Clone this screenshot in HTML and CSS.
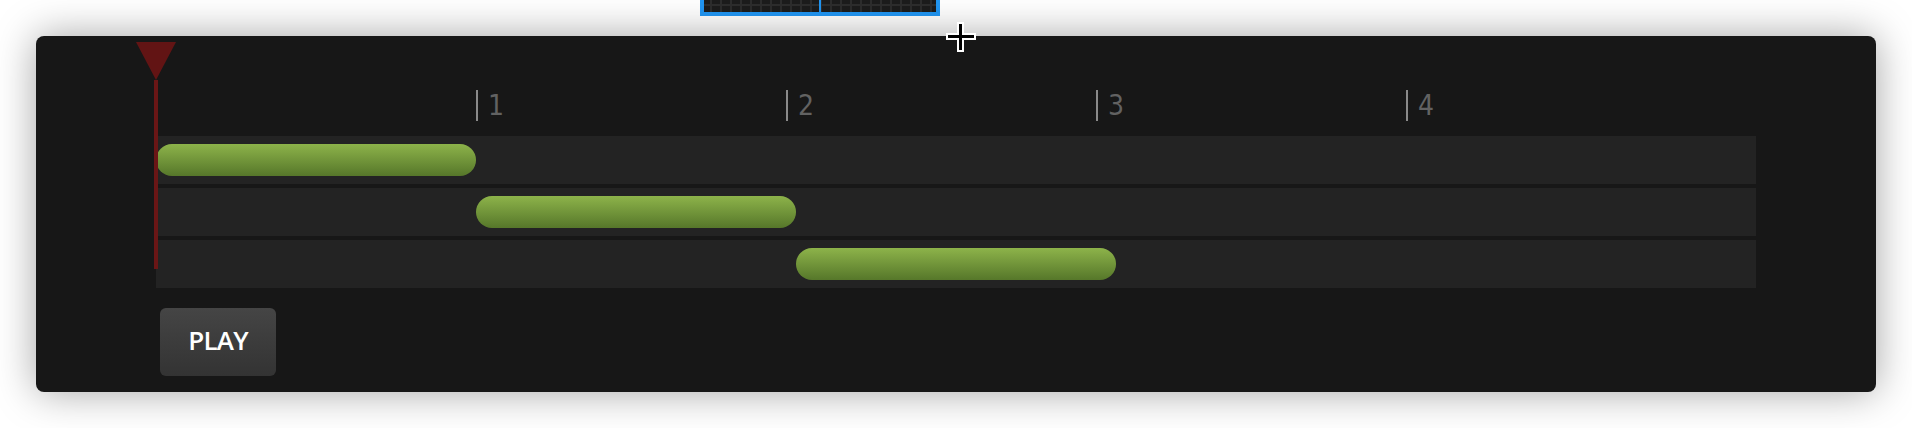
FILE: index.html
```html
<!DOCTYPE html>
<html>
<head>
<meta charset="utf-8">
<link rel="stylesheet" href="styles.css">
</head>
<body>
<div class="minimap"><div class="minimap-cursor"></div></div>

<section class="sequencer">
  <div class="playhead">
    <svg class="playhead-head" width="40" height="38" viewBox="0 0 40 38"><polygon points="0,0 40,0 20,38" fill="#621414"/></svg>
    <div class="playhead-line"></div>
  </div>

  <div class="ruler">
    <div class="tick">1</div>
    <div class="tick">2</div>
    <div class="tick">3</div>
    <div class="tick">4</div>
  </div>

  <div class="tracks">
    <div class="track"><div class="clip" style="margin-left:0px;width:320px"></div></div>
    <div class="track"><div class="clip" style="margin-left:320px;width:320px"></div></div>
    <div class="track"><div class="clip" style="margin-left:640px;width:320px"></div></div>
  </div>

  <button class="play-btn">PLAY</button>
</section>

<svg class="cursor" width="32" height="32" viewBox="0 0 32 32">
  <rect x="12" y="1" width="7" height="30" fill="#fff"/>
  <rect x="1" y="12" width="30" height="7" fill="#fff"/>
  <rect x="14" y="3" width="3" height="26" fill="#000"/>
  <rect x="3" y="14" width="26" height="3" fill="#000"/>
</svg>
</body>
</html>
```

FILE: styles.css
```css
html, body {
  margin: 0;
  padding: 0;
  background: #ffffff;
}

body {
  padding: 36px;
  font-family: "DejaVu Sans", sans-serif;
  overflow: hidden;
  height: 428px;
  box-sizing: border-box;
}

.minimap {
  position: absolute;
  left: 700px;
  top: -40px;
  width: 232px;
  height: 48px;
  border: 4px solid #2196f3;
  background-color: #1c1c1c;
  background-image:
    linear-gradient(to right, #2d2d2d 0 2px, transparent 2px),
    linear-gradient(to bottom, #2d2d2d 0 2px, transparent 2px);
  background-size: 10px 10px, 10px 10px;
  background-position: 6px 0, 0 0;
}

.minimap-cursor {
  position: absolute;
  left: 115px;
  top: 0;
  width: 2px;
  height: 100%;
  background: #2196f3;
}

.sequencer {
  position: relative;
  height: 356px;
  box-sizing: border-box;
  padding: 54px 120px 16px;
  background: #171717;
  border-radius: 8px;
  box-shadow: 0 0 40px rgba(0, 0, 0, 0.36);
  display: flex;
  flex-direction: column;
  align-items: flex-start;
}

.playhead {
  position: absolute;
  left: 100px;
  top: 6px;
  width: 40px;
  display: flex;
  flex-direction: column;
  align-items: center;
  z-index: 2;
}

.playhead-head {
  display: block;
}

.playhead-line {
  width: 4px;
  height: 189px;
  background: #6a1616;
}

.ruler {
  display: flex;
  height: 31px;
  padding-left: 320px;
  margin-bottom: 15px;
}

.tick {
  width: 310px;
  box-sizing: border-box;
  height: 31px;
  border-left: 2px solid #8a8a8a;
  padding-left: 10px;
  font-family: "DejaVu Sans Condensed", "DejaVu Sans", sans-serif;
  font-stretch: condensed;
  font-size: 28px;
  line-height: 32px;
  color: #626262;
}

.tracks {
  display: flex;
  flex-direction: column;
  gap: 4px;
  width: 1600px;
}

.track {
  height: 48px;
  box-sizing: border-box;
  padding: 8px 0;
  background: #232323;
  display: flex;
}

.clip {
  height: 32px;
  border-radius: 16px;
  background: linear-gradient(to bottom, #8db34a, #56772a);
}

.play-btn {
  margin-top: 20px;
  margin-left: 4px;
  width: 116px;
  height: 68px;
  border: none;
  border-radius: 6px;
  background: linear-gradient(to bottom, #454545, #333333);
  color: #ffffff;
  font-family: "Open Sans", "Noto Sans", sans-serif;
  font-weight: 600;
  font-size: 26px;
  letter-spacing: -0.8px;
  padding: 0 0 4px;
}

.cursor {
  position: absolute;
  left: 945px;
  top: 21px;
  z-index: 5;
}
```
